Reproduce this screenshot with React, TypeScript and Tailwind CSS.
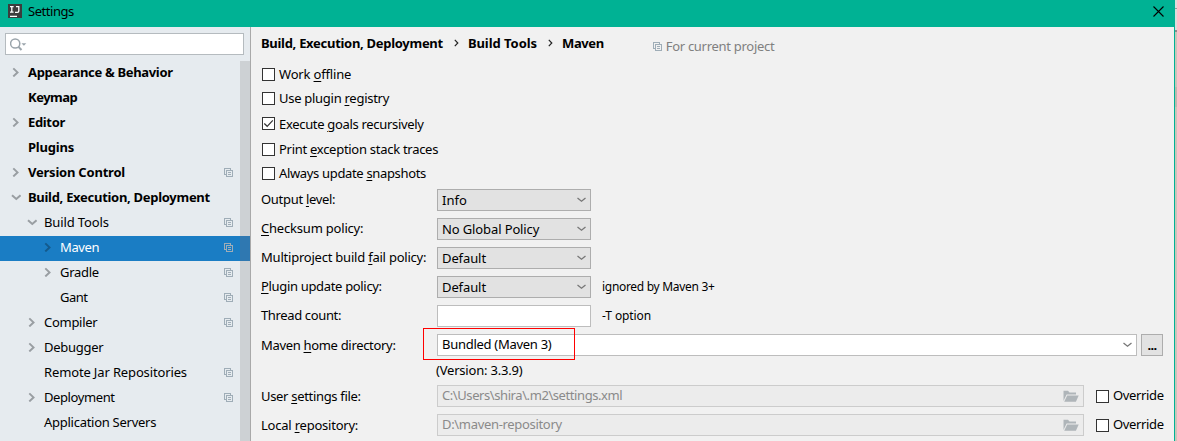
import React from "react";

const Copy = ({ className = "" }: { className?: string }) => (
  <svg width="9" height="9" viewBox="0 0 9 9" fill="none" stroke="#9fadb7" shapeRendering="crispEdges" className={"shrink-0 " + className}>
    <path d="M2 6.5H.5V.5H6.5V2M2.5 2.5H8.5V8.5H2.5ZM4 4.5H7M4 6.5H7" />
  </svg>
);

const Arrow = ({ open, color = "#999ea2" }: { open?: boolean; color?: string }) => (
  <svg width="10" height="10" viewBox="0 0 10 10" fill="none" stroke={color} strokeWidth="2" className="shrink-0">
    <path d={open ? "M1 3.2L5.3 7L9.6 3.2" : "M2.3 1.4L6.5 5.4L2.3 9.4"} />
  </svg>
);

type Row = { t: string; l: number; a?: "r" | "d"; c?: boolean; sel?: boolean; tr?: string };
const rows: Row[] = [
  { t: "Appearance & Behavior", l: 0, a: "r", tr: "tracking-[-0.33px]" },
  { t: "Keymap", l: 0, tr: "tracking-[-0.5px]" },
  { t: "Editor", l: 0, a: "r", tr: "tracking-[-0.35px]" },
  { t: "Plugins", l: 0, tr: "tracking-[-0.2px]" },
  { t: "Version Control", l: 0, a: "r", c: true, tr: "tracking-[-0.22px]" },
  { t: "Build, Execution, Deployment", l: 0, a: "d", tr: "tracking-[-0.29px]" },
  { t: "Build Tools", l: 1, a: "d", c: true, tr: "tracking-[-0.12px]" },
  { t: "Maven", l: 2, a: "r", c: true, sel: true, tr: "tracking-[-0.4px]" },
  { t: "Gradle", l: 2, a: "r", c: true, tr: "tracking-[-0.3px]" },
  { t: "Gant", l: 2, c: true, tr: "tracking-[-0.5px]" },
  { t: "Compiler", l: 1, a: "r", c: true, tr: "tracking-[-0.28px]" },
  { t: "Debugger", l: 1, a: "r", tr: "tracking-[-0.28px]" },
  { t: "Remote Jar Repositories", l: 1, c: true, tr: "tracking-[-0.14px]" },
  { t: "Deployment", l: 1, a: "r", c: true, tr: "tracking-[-0.4px]" },
  { t: "Application Servers", l: 1, tr: "tracking-[-0.27px]" },
];
const pads = ["pl-[11px]", "pl-[27px]", "pl-[43px]"];

const TreeRow = ({ r }: { r: Row }) => (
  <div className={"flex h-[25px] shrink-0 items-center " + (r.sel ? "bg-[#1a7dc4] text-white " : "") + pads[r.l]}>
    <div className="flex w-[17px] shrink-0 items-center pb-[3px]">
      {r.a && <Arrow open={r.a === "d"} color={r.sel ? "#145a8c" : undefined} />}
    </div>
    <span className={"grow pb-[3px] " + (r.l === 0 ? "font-bold " : "") + (r.tr ?? "")}>{r.t}</span>
    {r.c && <Copy className="mr-[7px] mb-[2px]" />}
    <div className={"h-full w-[10px] shrink-0 " + (r.sel ? "bg-[#2f78b1]" : "bg-[#cdd1d4]")} />
  </div>
);

const Box = ({ on }: { on?: boolean }) => (
  <div className="h-[13px] w-[13px] shrink-0 border border-[#333] bg-white">
    {on && (
      <svg width="11" height="11" viewBox="0 0 11 11" fill="none" stroke="#333" strokeWidth="1.2">
        <path d="M1.3 5.5L4.2 8.3L9.8 2.4" />
      </svg>
    )}
  </div>
);

/* The mnemonic letter is wrapped in underscores. */
const Label = ({ text, className = "" }: { text: string; className?: string }) => {
  const [a, b, c] = text.split("_");
  return (
    <span className={className}>
      {a}
      {b && <span className="underline decoration-1 underline-offset-2">{b}</span>}
      {c}
    </span>
  );
};

const Check = ({ text, on, className, tr }: { text: string; on?: boolean; className: string; tr: string }) => (
  <div className={"flex h-[13px] items-center gap-1 " + className}>
    <Box on={on} />
    <Label text={text} className={tr} />
  </div>
);

const Down = () => (
  <svg width="9" height="6" viewBox="0 0 9 6" fill="none" stroke="#777" strokeWidth="1.3" className="shrink-0">
    <path d="M.5 1L4.5 4.2L8.5 1" />
  </svg>
);

type FieldProps = { label: string; tr: string; children: React.ReactNode; className?: string };
const Field = ({ label, tr, children, className = "" }: FieldProps) => (
  <div className={"flex h-[22px] items-center " + className}>
    <Label text={label} className={"w-[176px] shrink-0 " + tr} />
    {children}
  </div>
);

const Select = ({ v, tr = "" }: { v: string; tr?: string }) => (
  <div className="flex h-[22px] w-[154px] shrink-0 items-center justify-between border border-[#adadad] bg-[#e2e2e2] pr-1 pl-1">
    <span className={tr}>{v}</span>
    <Down />
  </div>
);

const PathField = ({ v, tr }: { v: string; tr: string }) => (
  <>
    <div className="flex h-[22px] w-[647px] shrink-0 items-center justify-between border border-[#cccccc] bg-[#ececec] pr-1 pl-1 text-[#8a8a8a]">
      <span className={"pb-[2px] " + tr}>{v}</span>
      <svg width="16" height="12" viewBox="0 0 16 12" fill="#afb5b9">
        <path d="M.5 11V.8H5L6.5 2.6H13V4.6H3.6L1.2 9.5Z" />
        <path d="M4.2 5.4H15.7L12.9 11.8H1.2Z" />
      </svg>
    </div>
    <div className="ml-3 flex items-center gap-1">
      <Box />
      <span className="pb-[2px] tracking-[-0.35px]">Override</span>
    </div>
  </>
);

const Sep = () => (
  <svg width="5" height="8" viewBox="0 0 5 8" fill="none" stroke="#222" strokeWidth="1.2" className="mr-[9px] ml-[11px]">
    <path d="M.8 .8L3.8 4L.8 7.2" />
  </svg>
);

export default function App() {
  return (
    <div className="flex h-[441px] w-[1177px] overflow-hidden bg-[#c9c5b9] font-['Noto_Sans','Open_Sans',sans-serif] text-[13px] leading-[18px] whitespace-nowrap text-black">
      <div className="flex w-[1175px] shrink-0 flex-col border-r border-[#00b294]">
        <header className="flex h-[27px] shrink-0 items-center bg-[#00b294] pr-[10px] pl-2">
          <svg width="14" height="14" viewBox="0 0 14 14" className="mb-[5px]">
            <path fill="#3c3c3c" d="M0 0H14V14H0Z" />
            <path fill="none" stroke="#fff" strokeWidth="1.3" d="M2 2.6H5.6M3.8 2.6V8.2M2 8.2H5.6M8 2.6H10.8V7Q10.8 8.3 9.4 8.3H7M2 12.3H9" />
          </svg>
          <span className="ml-[6px] grow pb-[5px] tracking-[-0.45px]">Settings</span>
          <svg width="11" height="11" viewBox="0 0 11 11" stroke="#000" strokeWidth="1.1" className="mb-[5px]">
            <path d="M.5 .5L10.5 10.5M10.5 .5L.5 10.5" />
          </svg>
        </header>
        <div className="flex h-[414px]">
          <aside className="flex w-[251px] shrink-0 flex-col border-r border-[#a9a9a9] bg-[#e6ebef] pt-[6px]">
            <div className="mb-[6px] ml-[5px] flex h-[22px] w-[239px] shrink-0 items-center border border-[#b5bbbf] bg-white pl-1">
              <svg width="17" height="13" viewBox="0 0 17 13" fill="none" stroke="#9ba5ac" strokeWidth="1.5">
                <circle cx="5.2" cy="5.5" r="4.6" />
                <path d="M8.3 8.6L11.5 12" strokeWidth="2" />
                <path d="M11.5 5.2H16.3L13.9 7.8Z" fill="#9ba5ac" stroke="none" />
              </svg>
            </div>
            {rows.map((r) => (
              <TreeRow key={r.t} r={r} />
            ))}
            <div className="ml-auto w-[10px] grow bg-[#cdd1d4]" />
          </aside>
          <main className="flex w-[923px] flex-col bg-[#f1f1f1] pl-[10px]">
            <div className="flex h-[33px] items-center pb-px font-bold">
              <span className="tracking-[-0.29px]">Build, Execution, Deployment</span>
              <Sep />
              <span className="tracking-[-0.05px]">Build Tools</span>
              <Sep />
              <span className="tracking-[-0.4px]">Maven</span>
              <span className="ml-[49px] flex items-center gap-1 pt-[6px] font-normal tracking-[-0.29px] text-[#808080]">
                <Copy />
                For current project
              </span>
            </div>
            <div className="flex flex-col pt-2 pl-px">
              <Check text="Work _o_ffline" tr="tracking-[-0.17px] pb-px" className="" />
              <Check text="Use plugin _r_egistry" tr="tracking-[-0.28px] pb-px" className="mt-[11px]" />
              <Check text="Execute _g_oals recursively" on tr="tracking-[-0.32px]" className="mt-3" />
              <Check text="Print _e_xception stack traces" tr="tracking-[-0.28px] pb-px" className="mt-[13px]" />
              <Check text="Always update _s_napshots" tr="tracking-[-0.34px] pb-px" className="mt-[11px]" />
            </div>
            <div className="mt-[9px] flex flex-col gap-[7px]">
              <Field label="Output _l_evel:" tr="pb-[2px] tracking-[-0.3px]"><Select v="Info" /></Field>
              <Field label="_C_hecksum policy:" tr="pb-[2px] tracking-[-0.2px]"><Select v="No Global Policy" tr="tracking-[-0.12px]" /></Field>
              <Field label="Multiproject build _f_ail policy:" tr="pb-[2px] tracking-[-0.22px]"><Select v="Default" tr="tracking-[-0.1px]" /></Field>
              <Field label="_P_lugin update policy:" tr="pb-[2px] tracking-[-0.33px]">
                <Select v="Default" tr="tracking-[-0.1px]" />
                <span className="ml-[11px] text-xs tracking-[-0.3px]">ignored by Maven 3+</span>
              </Field>
              <Field label="Thread count:" tr="pb-[2px] tracking-[-0.36px]">
                <div className="h-[22px] w-[154px] border border-[#bdbdbd] bg-white" />
                <span className="ml-[11px] text-xs tracking-[-0.1px]">-T option</span>
              </Field>
              <Field label="Maven _h_ome directory:" tr="tracking-[-0.32px]">
                <div className="relative flex h-[22px] w-[700px] shrink-0 items-center justify-between border border-[#bdbdbd] bg-white pr-1 pl-1">
                  <span className="pb-[2px] tracking-[-0.28px]">Bundled (Maven 3)</span>
                  <Down />
                  <div className="absolute -top-[7px] -left-[15px] h-[32px] w-[152px] border border-[#f00]" />
                </div>
                <div className="ml-1 flex h-[22px] w-[22px] items-center justify-center border border-[#adadad] bg-[#e2e2e2] pb-px font-bold tracking-[-0.7px]">...</div>
              </Field>
            </div>
            <div className="mt-[5px] h-[18px] pl-[175px] tracking-[-0.2px]">(Version: 3.3.9)</div>
            <Field label="User _s_ettings file:" tr="tracking-[-0.32px]" className="mt-[6px]">
              <PathField v="C:\Users\shira\.m2\settings.xml" tr="tracking-[-0.42px]" />
            </Field>
            <Field label="Local _r_epository:" tr="tracking-[-0.22px]" className="mt-[7px]">
              <PathField v="D:\maven-repository" tr="tracking-[-0.32px]" />
            </Field>
          </main>
        </div>
      </div>
      <div className="flex w-[2px] flex-col">
        <div className="h-8 border-b-2 border-[#8c8c8c] bg-[#dcdcdc] pt-2">
          <div className="h-px bg-[#999]" />
        </div>
        <div className="mt-[55px] h-5 bg-[#bdb9ae]" />
      </div>
    </div>
  );
}
